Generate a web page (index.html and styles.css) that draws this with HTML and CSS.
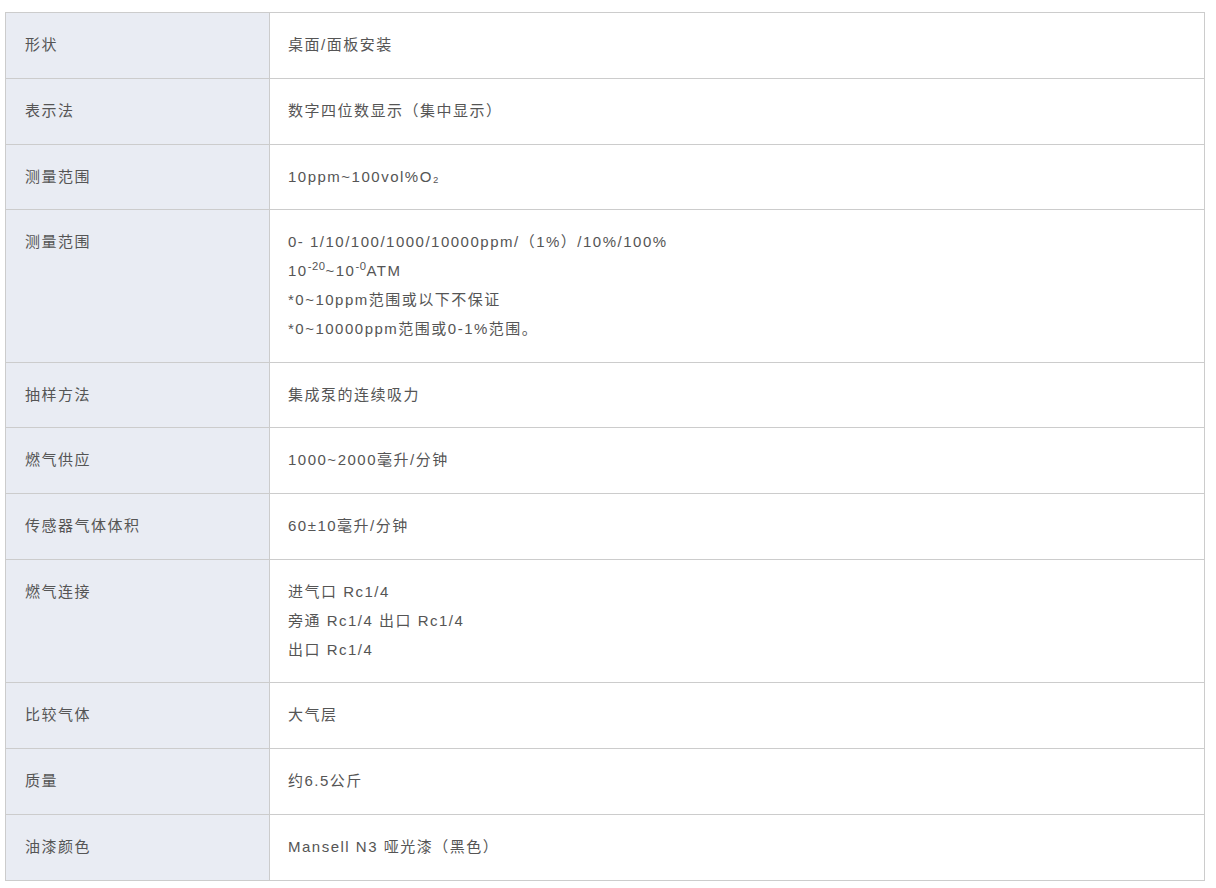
FILE: index.html
```html
<!DOCTYPE html>
<html lang="zh-CN">
<head>
<meta charset="utf-8">
<title>规格</title>
<link rel="stylesheet" href="styles.css">
</head>
<body>
<div class="wrap">
<table class="spec">
<colgroup><col class="c-label"><col class="c-value"></colgroup>
<tbody>
<tr><th>形状</th><td>桌面/面板安装</td></tr>
<tr><th>表示法</th><td>数字四位数显示（集中显示）</td></tr>
<tr><th>测量范围</th><td>10ppm~100vol%O₂</td></tr>
<tr><th>测量范围</th><td>0- 1/10/100/1000/10000ppm/（1%）/10%/100%<br>10<sup>-20</sup>~10<sup>-0</sup>ATM<br>*0~10ppm范围或以下不保证<br>*0~10000ppm范围或0-1%范围。</td></tr>
<tr><th>抽样方法</th><td>集成泵的连续吸力</td></tr>
<tr><th>燃气供应</th><td>1000~2000毫升/分钟</td></tr>
<tr><th>传感器气体体积</th><td>60±10毫升/分钟</td></tr>
<tr><th>燃气连接</th><td>进气口 Rc1/4<br>旁通 Rc1/4 出口 Rc1/4<br>出口 Rc1/4</td></tr>
<tr><th>比较气体</th><td>大气层</td></tr>
<tr><th>质量</th><td>约6.5公斤</td></tr>
<tr><th>油漆颜色</th><td>Mansell N3 哑光漆（黑色）</td></tr>
</tbody>
</table>
</div>
</body>
</html>
```

FILE: styles.css
```css
html, body {
  margin: 0;
  padding: 0;
  background: #ffffff;
}
.wrap {
  padding: 12px 11px 0 5px;
}
.spec {
  width: 1200px;
  border-collapse: collapse;
  table-layout: fixed;
  font-family: "Liberation Sans", "Noto Sans CJK SC", sans-serif;
  font-size: 15px;
  line-height: 28.8px;
  letter-spacing: 1.5px;
  color: #555555;
}
.c-label { width: 264px; }
.spec th,
.spec td {
  border: 1px solid #cccccc;
  vertical-align: top;
  text-align: left;
  font-weight: normal;
  padding: 18px 19px 18px 19px;
}
.spec th {
  background: #e9ecf3;
}
.spec td {
  padding-left: 18px;
}
.spec sup {
  font-size: 0.75em;
  line-height: 0;
  vertical-align: 0.55em;
  letter-spacing: 0.5px;
}
```
